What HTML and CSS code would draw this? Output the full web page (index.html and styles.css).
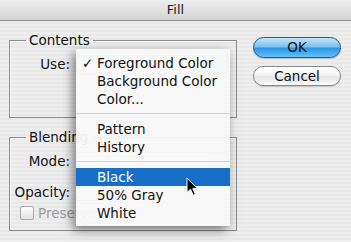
FILE: index.html
```html
<!DOCTYPE html>
<html>
<head>
<meta charset="utf-8">
<link rel="stylesheet" href="styles.css">
</head>
<body>
<div class="window">
  <div class="titlebar">Fill</div>
  <div class="dialog">
    <div class="groups">
      <fieldset class="group contents">
        <legend>Contents</legend>
        <div class="row use-row">
          <span class="label">Use:</span>
          <span class="popup"><span class="popup-arrow"></span></span>
        </div>
      </fieldset>
      <fieldset class="group blending">
        <legend>Blending</legend>
        <div class="row mode-row">
          <span class="label">Mode:</span>
          <span class="popup"><span class="popup-arrow"></span></span>
        </div>
        <div class="row opacity-row">
          <span class="label">Opacity:</span>
          <span class="field"></span>
        </div>
        <div class="row check-row">
          <span class="checkbox"></span>
          <span class="dim">Preserve</span>
        </div>
      </fieldset>
    </div>
    <div class="buttons">
      <div class="btn ok">OK</div>
      <div class="btn cancel">Cancel</div>
    </div>
  </div>

  <div class="menu">
    <div class="item"><span class="check">✓</span>Foreground Color</div>
    <div class="item">Background Color</div>
    <div class="item">Color...</div>
    <div class="sep"></div>
    <div class="item">Pattern</div>
    <div class="item">History</div>
    <div class="sep"></div>
    <div class="item selected">Black</div>
    <div class="item">50% Gray</div>
    <div class="item">White</div>
  </div>

  <svg class="cursor" width="13" height="20" viewBox="0 0 13 20">
    <path d="M1 1 L1 15.5 L4.5 12.2 L7.2 18.3 L9.4 17.3 L6.8 11.4 L11.5 11.4 Z" fill="#000" stroke="#fff" stroke-width="1" stroke-linejoin="round"/>
  </svg>
</div>
</body>
</html>
```

FILE: styles.css
```css
html, body {
  margin: 0;
  padding: 0;
}
body {
  width: 351px;
  height: 242px;
  overflow: hidden;
  font-family: "DejaVu Sans", "Liberation Sans", sans-serif;
  font-size: 13px;
  color: #111;
}
.window {
  position: relative;
  width: 351px;
  height: 242px;
  background: repeating-linear-gradient(to bottom, #eeeeee 0, #eeeeee 2px, #e8e8e8 2px, #e8e8e8 4px);
}
.titlebar {
  height: 20px;
  line-height: 20px;
  text-align: center;
  font-size: 13px;
  color: #222;
  background: linear-gradient(to bottom, #eeeeee, #d4d4d4);
  border-bottom: 1px solid #8f8f8f;
}
.dialog {
  display: flex;
  padding: 11px 0 0 9px;
}
.groups {
  width: 228px;
  display: flex;
  flex-direction: column;
  gap: 11px;
}
.group {
  margin: 0;
  padding: 0;
  border: 1px solid #8c8c8c;
  box-shadow: inset 1px 1px 0 #f8f8f8;
  min-width: 0;
  box-sizing: border-box;
}
.group legend {
  margin-left: 16px;
  padding: 0 3px;
  font-size: 13.5px;
  line-height: 16px;
  color: #111;
}
.contents { height: 86px; }
.blending { height: 102px; }
.row {
  display: flex;
  align-items: center;
  height: 18px;
  font-size: 13.5px;
}
.label {
  width: 60px;
  text-align: right;
  flex: none;
}
.use-row { margin-top: 7px; }
.mode-row { margin-top: 7px; }
.opacity-row { margin-top: 13px; }
.check-row { margin-top: 3px; padding-left: 10px; }
.popup {
  margin-left: 6px;
  width: 150px;
  height: 17px;
  display: flex;
  align-items: center;
  justify-content: flex-end;
  border-radius: 4px;
  background: #fbfbfb;
  border: 1px solid #a8a8a8;
}
.popup-arrow {
  width: 18px;
  height: 17px;
  background: #d9e6f3;
  border-radius: 0 4px 4px 0;
}
.field {
  margin-left: 6px;
  width: 40px;
  height: 16px;
  border: 1px solid #999;
  background: #fff;
}
.checkbox {
  width: 12px;
  height: 12px;
  border: 1px solid #a9a9a9;
  border-radius: 2px;
  background: linear-gradient(#fbfbfb, #e4e4e4);
  margin-right: 4px;
  flex: none;
}
.dim { color: #9a9a9a; }
.buttons {
  margin-left: 16px;
  padding-top: 5px;
  display: flex;
  flex-direction: column;
  gap: 8px;
}
.btn {
  width: 88px;
  box-sizing: border-box;
  text-align: center;
  font-size: 13.5px;
  border-radius: 11px;
}
.ok {
  height: 21px;
  line-height: 19px;
  border: 1px solid #24588f;
  color: #111;
  background: linear-gradient(to bottom, #c4e4fb 0%, #7dc0f2 45%, #2f95e6 55%, #62c2fb 100%);
  box-shadow: 0 1px 1px rgba(0,0,0,0.2);
}
.cancel {
  height: 20px;
  line-height: 18px;
  border: 1px solid #888;
  color: #111;
  background: linear-gradient(to bottom, #ffffff 0%, #f6f6f6 45%, #e4e4e4 55%, #fbfbfb 100%);
  box-shadow: 0 1px 1px rgba(0,0,0,0.15);
}
.menu {
  position: absolute;
  left: 76px;
  top: 49px;
  width: 154px;
  padding: 5px 0 4px;
  background: rgba(248, 248, 248, 0.95);
  box-shadow: -3px 4px 10px rgba(0, 0, 0, 0.5);
  font-size: 13.5px;
}
.item {
  position: relative;
  height: 18px;
  line-height: 18px;
  padding-left: 21px;
  color: #111;
}
.item.selected {
  background: #166ec6;
  color: #fff;
}
.check {
  position: absolute;
  left: 6px;
  top: 0;
}
.sep {
  height: 12px;
  background: linear-gradient(to bottom, transparent 5px, #d2d2d2 5px, #d2d2d2 6px, transparent 6px);
}
.cursor {
  position: absolute;
  left: 186px;
  top: 177px;
}
```
